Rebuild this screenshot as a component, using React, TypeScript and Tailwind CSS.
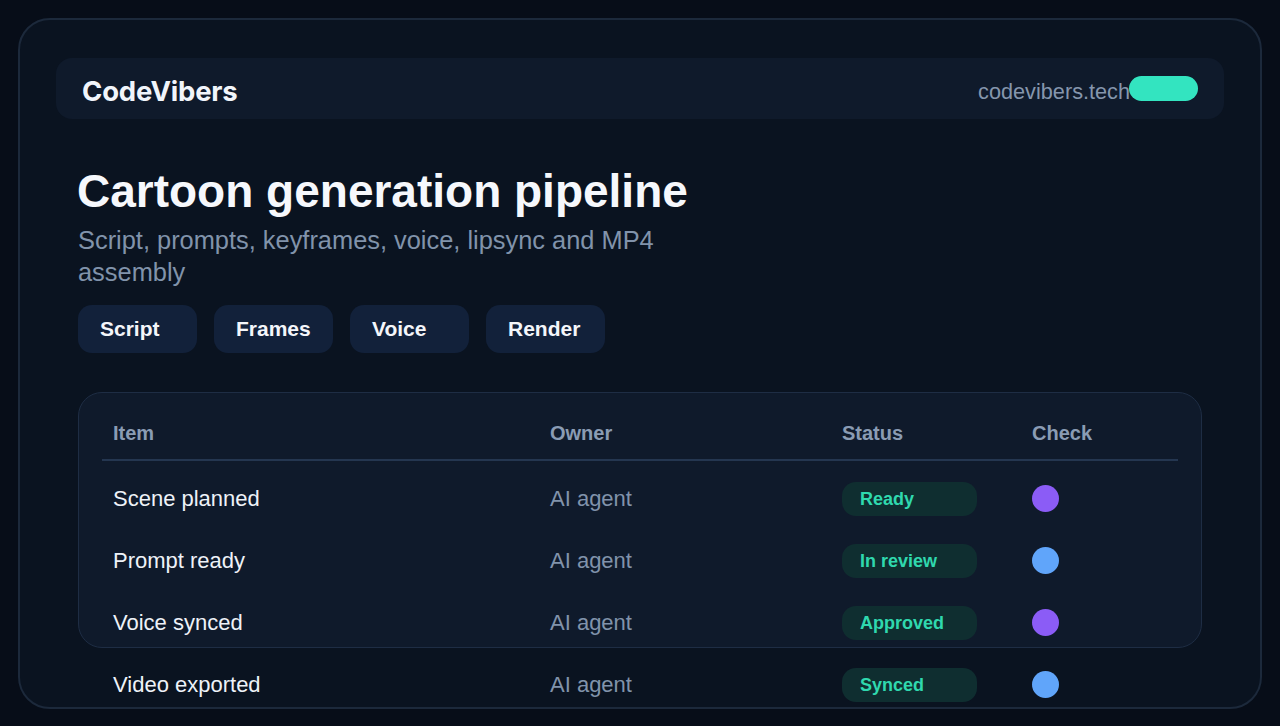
const rows = [
  { item: 'Scene planned', owner: 'AI agent', status: 'Ready', dot: 'bg-[#8b5cf6]' },
  { item: 'Prompt ready', owner: 'AI agent', status: 'In review', dot: 'bg-[#60a5fa]' },
  { item: 'Voice synced', owner: 'AI agent', status: 'Approved', dot: 'bg-[#8b5cf6]' },
  { item: 'Video exported', owner: 'AI agent', status: 'Synced', dot: 'bg-[#60a5fa]' },
];

const tabs = ['Script', 'Frames', 'Voice', 'Render'];

const cols = 'grid grid-cols-[437px_292px_190px_158px]';

export default function App() {
  return (
    <div className="min-h-[726px] bg-[#070d18] p-[18px] font-['Liberation_Sans',Arial,sans-serif]">
      <div className="h-[691px] rounded-[32px] border-2 border-[#1c293b] bg-[#0a1320] px-[36px] pt-[38px]">
        {/* top bar */}
        <header className="flex h-[61px] items-center justify-between rounded-[16px] bg-[#0f1a2b] pl-[26px] pr-[26px]">
          <span className="mt-[6px] font-['Inter',sans-serif] text-[27.5px] font-bold tracking-[-0.2px] text-[#f1f5fb]">CodeVibers</span>
          <div className="flex items-center">
            <span className="mt-[7px] text-[21.7px] text-[#8596ad]">codevibers.tech</span>
            <span className="-ml-[1px] mt-[1px] h-[25px] w-[69px] rounded-full bg-[#33e4c0]" />
          </div>
        </header>

        <main className="px-[22px]">
          <h1 className="-ml-[1px] mt-[47px] text-[46px] font-bold leading-[50px] text-[#f6f8fc]">Cartoon generation pipeline</h1>
          <p className="mt-[8px] max-w-[600px] text-[25.4px] leading-[32px] text-[#8193ab]">
            Script, prompts, keyframes, voice, lipsync and MP4 assembly
          </p>

          <div className="mt-[17px] flex gap-[17px]">
            {tabs.map((t) => (
              <button
                key={t}
                className="h-[48px] w-[119px] rounded-[14px] bg-[#12213a] pl-[22px] text-left text-[21px] font-bold text-[#f4f6fa]"
              >
                {t}
              </button>
            ))}
          </div>

          {/* pipeline table */}
          <section className="mt-[39px] h-[256px] rounded-[24px] border border-[#1e2d44] bg-[#0f1a2b] px-[23px] pt-[23px]">
            <div className={`${cols} h-[45px] items-center border-b-2 border-[#243650] pb-[9px] text-[20px] font-bold text-[#8a9cb4]`}>
              <div className="pl-[11px]">Item</div>
              <div className="pl-[11px]">Owner</div>
              <div className="pl-[11px]">Status</div>
              <div className="pl-[11px]">Check</div>
            </div>
            <div className="pt-[6px]">
              {rows.map((r) => (
                <div key={r.item} className={`${cols} h-[62px] items-center`}>
                  <div className="pl-[11px] text-[22px] text-[#eef2f8]">{r.item}</div>
                  <div className="pl-[11px] text-[22px] text-[#8193ab]">{r.owner}</div>
                  <div className="pl-[11px]">
                    <span className="mt-[2px] flex h-[34px] w-[135px] items-center rounded-[14px] bg-[#0f2e30] pl-[18px] text-[18px] font-bold text-[#2fd8ae]">
                      {r.status}
                    </span>
                  </div>
                  <div className="pl-[11px]">
                    <span className={`block h-[27px] w-[27px] rounded-full ${r.dot}`} />
                  </div>
                </div>
              ))}
            </div>
          </section>
        </main>
      </div>
    </div>
  );
}
